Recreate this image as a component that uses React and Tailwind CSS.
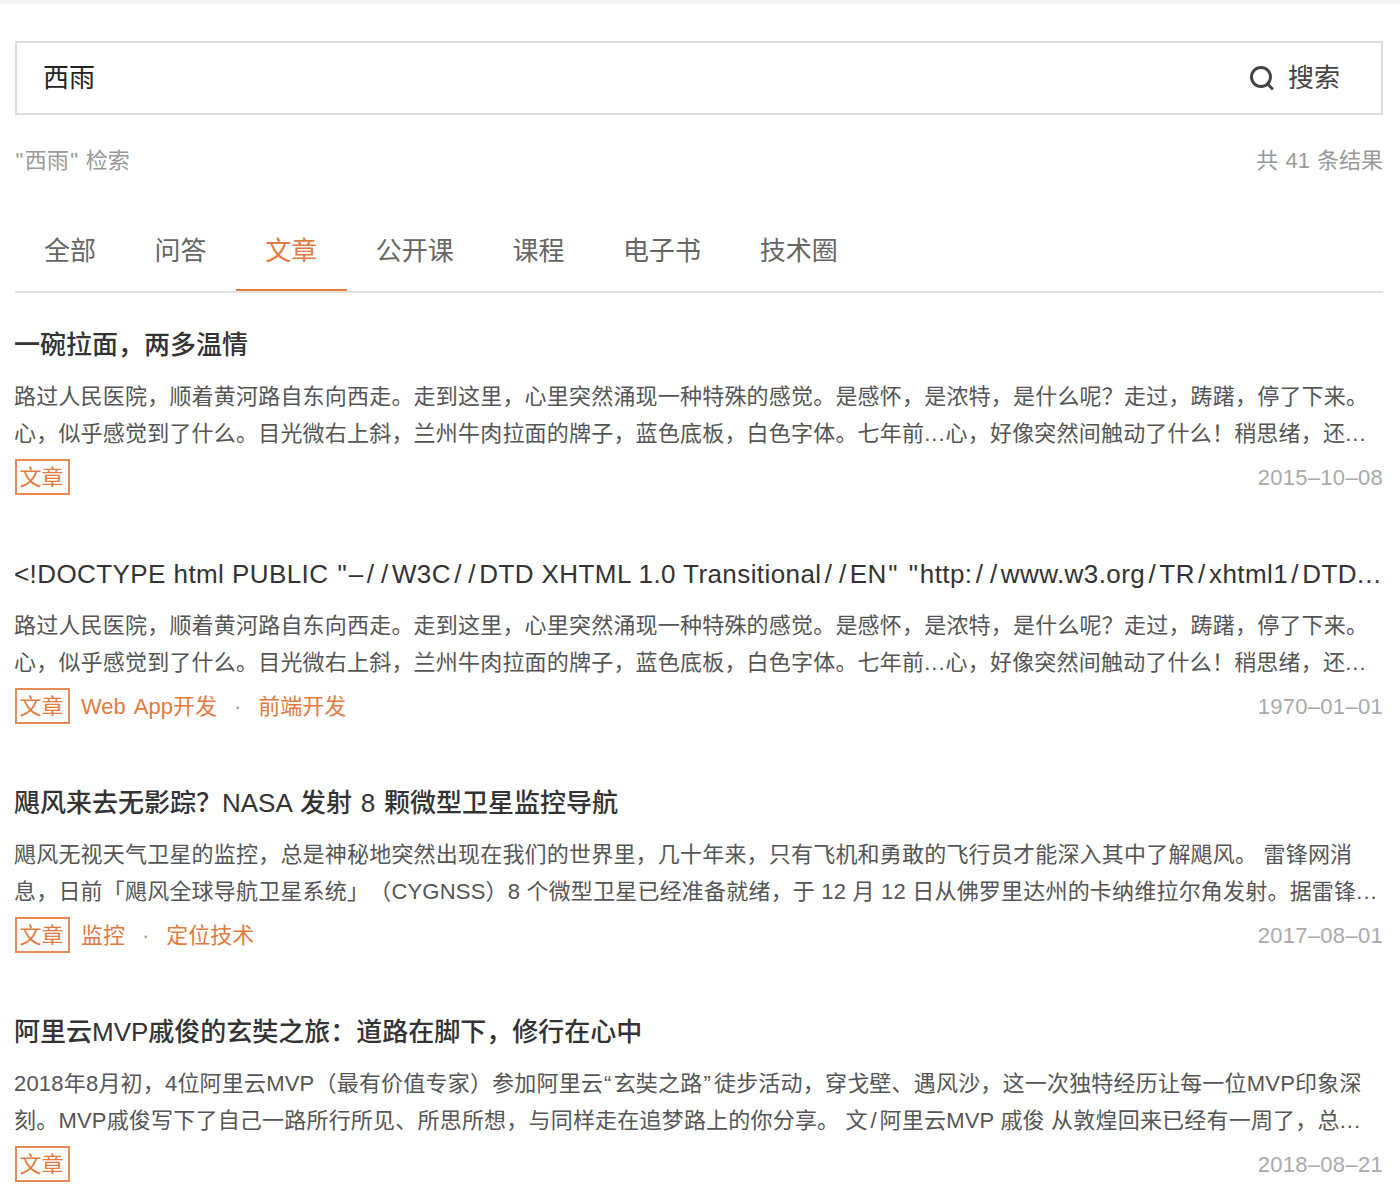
const tabs = ['全部', '问答', '文章', '公开课', '课程', '电子书', '技术圈'];

const desc1 = [
  '路过人民医院，顺着黄河路自东向西走。走到这里，心里突然涌现一种特殊的感觉。是感怀，是浓特，是什么呢？走过，踌躇，停了下来。',
  '心，似乎感觉到了什么。目光微右上斜，兰州牛肉拉面的牌子，蓝色底板，白色字体。七年前...心，好像突然间触动了什么！稍思绪，还...',
];

const results = [
  { title: '一碗拉面，两多温情', lines: desc1, tags: [], date: '2015–10–08' },
  {
    title: '<!DOCTYPE html PUBLIC "–//W3C//DTD XHTML 1.0 Transitional//EN" "http://www.w3.org/TR/xhtml1/DTD...',
    plain: true,
    lines: desc1,
    tags: ['Web App开发', '前端开发'],
    date: '1970–01–01',
  },
  {
    title: '飓风来去无影踪？NASA 发射 8 颗微型卫星监控导航',
    lines: [
      '飓风无视天气卫星的监控，总是神秘地突然出现在我们的世界里，几十年来，只有飞机和勇敢的飞行员才能深入其中了解飓风。 雷锋网消',
      '息，日前「飓风全球导航卫星系统」（CYGNSS）8 个微型卫星已经准备就绪，于 12 月 12 日从佛罗里达州的卡纳维拉尔角发射。据雷锋...',
    ],
    tags: ['监控', '定位技术'],
    date: '2017–08–01',
  },
  {
    title: '阿里云MVP戚俊的玄奘之旅：道路在脚下，修行在心中',
    lines: [
      '2018年8月初，4位阿里云MVP（最有价值专家）参加阿里云“玄奘之路”徒步活动，穿戈壁、遇风沙，这一次独特经历让每一位MVP印象深',
      '刻。MVP戚俊写下了自己一路所行所见、所思所想，与同样走在追梦路上的你分享。 文/阿里云MVP 戚俊 从敦煌回来已经有一周了，总...',
    ],
    tags: [],
    date: '2018–08–21',
  },
];

// these marks sit wider apart than Liberation Sans draws them
const wide = {
  '...': 'tracking-[1px]',
  '/': 'px-[0.125em]',
  '"': 'px-[1.5px]',
  '“': 'pl-[1px] pr-[2px]',
  '”': 'pl-[1px] pr-[3px]',
};

const spaced = (text) =>
  text.split(/(\.\.\.|\/|"|“|”)/).map((part, i) =>
    wide[part] ? (
      <span key={i} className={wide[part]}>{part}</span>
    ) : (
      part
    )
  );

const Result = ({ item }) => (
  <div className="h-[229px] pt-[34px]">
    <h3
      className={`-ml-px text-[26px] leading-[36px] whitespace-nowrap text-[#333] ${
        item.plain ? 'tracking-[0.42px]' : 'font-medium [word-spacing:1.5px]'
      }`}
    >
      {spaced(item.title)}
    </h3>
    <div className="-ml-px mt-[15px] text-[22px] leading-[37px] text-[#555] tracking-[0.2px]">
      {item.lines.map((line) => (
        <p key={line} className="whitespace-nowrap">{spaced(line)}</p>
      ))}
    </div>
    <div className="mt-[7px] flex items-center justify-between">
      <div className="flex items-center text-[22px] text-[#e27b40]">
        <span className="h-[36px] w-[55px] border-2 border-[#eb8a54] flex items-center justify-center leading-none pt-[2px] pr-[2px]">文章</span>
        {item.tags.map((tag, i) => (
          <span key={tag} className="flex items-center">
            {i > 0 && <span className="mx-[17px] text-[#999]">·</span>}
            <span className={`[word-spacing:3px] ${i === 0 ? 'ml-[11px]' : ''}`}>{tag}</span>
          </span>
        ))}
      </div>
      <span className="text-[22px] text-[#aaa] tracking-[0.3px]">{item.date}</span>
    </div>
  </div>
);

export default function App() {
  return (
    <div className="w-[1400px] h-[1195px] overflow-hidden bg-white [text-spacing-trim:space-all] font-['Liberation_Sans','Noto_Sans_CJK_SC',sans-serif]">
      <div className="h-[4px] bg-[#f4f4f4]" />
      <div className="px-[15px] pr-[17px]">
        <div className="mt-[37px] h-[74px] border-2 border-[#ddd] flex items-center justify-between pl-[26px] pr-[41px]">
          <span className="text-[26px] text-[#222]">西雨</span>
          <div className="flex items-center gap-[14px] text-[#444]">
            <svg width="24" height="24" viewBox="0 0 24 24" fill="none" stroke="#444" strokeWidth="3" strokeLinecap="round">
              <circle cx="11" cy="11" r="9.5" />
              <path d="M17.5 18 L22 22.5" />
            </svg>
            <span className="text-[26px]">搜索</span>
          </div>
        </div>
        <div className="mt-[31px] flex items-center justify-between text-[22px] leading-[30px] text-[#999]">
          <span className="-ml-px">{spaced('"西雨" 检索')}</span>
          <span className="[word-spacing:1px]">共 41 条结果</span>
        </div>
        <div className="mt-[45px] h-[72px] border-b-2 border-[#e3e3e3] flex">
          {tabs.map((tab) => (
            <div
              key={tab}
              className={`h-[70px] pl-[29px] pr-[29.6px] pt-[12px] text-[26px] leading-[36px] ${
                tab === '文章' ? 'text-[#e27b40] border-b-2 border-[#e7793b]' : 'text-[#666]'
              }`}
            >
              {tab}
            </div>
          ))}
        </div>
        {results.map((item) => (
          <Result key={item.title} item={item} />
        ))}
      </div>
    </div>
  );
}
